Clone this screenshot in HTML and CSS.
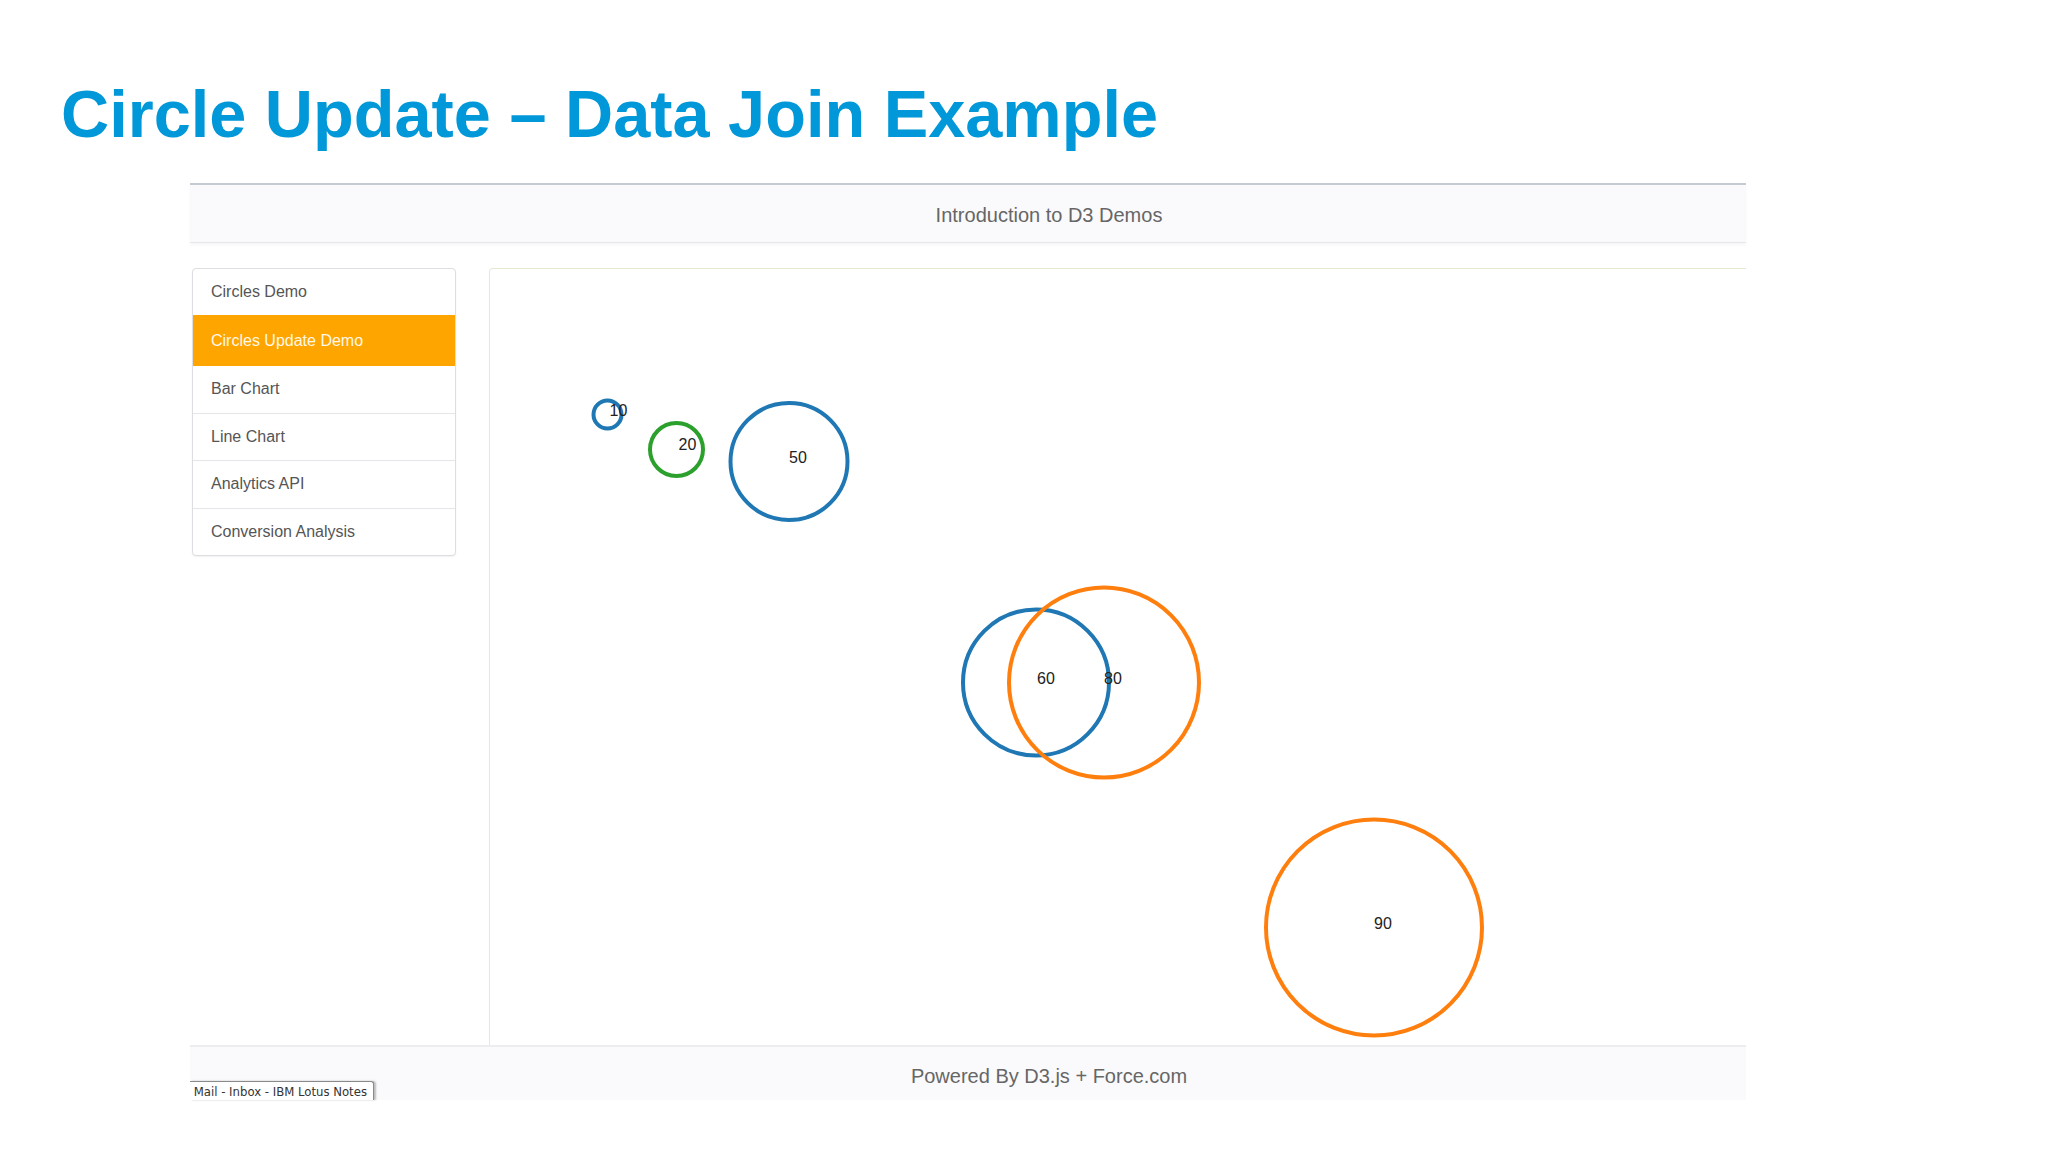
FILE: index.html
```html
<!DOCTYPE html>
<html lang="en">
<head>
<meta charset="utf-8">
<title>Circle Update – Data Join Example</title>
<link rel="stylesheet" href="styles.css">
</head>
<body>
<h1 class="title">Circle Update – Data Join Example</h1>
<div class="app">
  <div class="topbar"><span>Introduction to D3 Demos</span></div>
  <div class="main">
    <ul class="menu">
      <li class="item">Circles Demo</li>
      <li class="item active">Circles Update Demo</li>
      <li class="item">Bar Chart</li>
      <li class="item">Line Chart</li>
      <li class="item">Analytics API</li>
      <li class="item">Conversion Analysis</li>
    </ul>
    <div class="panel">
      <svg class="chart" viewBox="0 0 1256 777" width="1256" height="777">
        <g class="c blue"><circle cx="117.5" cy="145.5" r="14"/><text x="119.5" y="146.5">10</text></g>
        <g class="c green"><circle cx="186.5" cy="180.5" r="26.5"/><text x="188.5" y="180.5">20</text></g>
        <g class="c blue"><circle cx="299" cy="192.5" r="58.5"/><text x="299" y="193.5">50</text></g>
        <g class="c blue"><circle cx="546" cy="413.5" r="73"/><text x="547" y="414.5">60</text></g>
        <g class="c orange"><circle cx="614" cy="413.5" r="95"/><text x="614" y="414.5">80</text></g>
        <g class="c orange"><circle cx="884" cy="658.5" r="108"/><text x="884" y="659.5">90</text></g>
      </svg>
    </div>
  </div>
  <div class="footer">
    <span>Powered By D3.js + Force.com</span>
    <div class="tab"><span>Mail - Inbox - IBM Lotus Notes</span></div>
  </div>
</div>
</body>
</html>
```
FILE: styles.css
```css
html, body {
  margin: 0;
  padding: 0;
  background: #ffffff;
}
body {
  width: 2048px;
  height: 1152px;
  overflow: hidden;
  font-family: "Liberation Sans", Arial, sans-serif;
}
.title {
  margin: 0;
  padding: 81px 0 0 61px;
  font-size: 66.7px;
  line-height: 67px;
  font-weight: bold;
  color: #0098d8;
}
.app {
  margin: 35px 0 0 190px;
  width: 1556px;
}
.topbar {
  border-top: 2px solid #c3cad2;
  border-bottom: 1px solid #e6e6ec;
  background: #fafafc;
  box-shadow: 0 2px 3px rgba(0, 0, 0, 0.04);
  display: flex;
  align-items: center;
  justify-content: center;
  padding-left: 162px;
  padding-top: 3px;
  box-sizing: border-box;
  height: 60px;
  font-size: 20px;
  color: #666;
}
.main {
  display: flex;
  margin-top: 25px;
}
.menu {
  list-style: none;
  margin: 0 0 0 2px;
  padding: 0;
  width: 262px;
  align-self: flex-start;
  border: 1px solid #dedee2;
  border-radius: 4px;
  box-shadow: 0 1px 2px rgba(0, 0, 0, 0.06);
  overflow: hidden;
  background: #fff;
}
.item {
  height: 46.5px;
  display: flex;
  align-items: center;
  padding-left: 18px;
  font-size: 16px;
  color: #555;
  border-top: 1px solid #e6e6ea;
}
.item:first-child {
  border-top: none;
  height: 46px;
}
.item.active {
  background: #ffa500;
  color: #fff8e8;
  border-top-color: #ffa500;
  height: 49px;
}
.active + .item {
  border-top-color: #ffa500;
}
.panel {
  margin-left: 33px;
  flex: 1;
  height: 777px;
  box-sizing: border-box;
  border-left: 1px solid #e6e6e6;
  border-top: 1px solid #e4e9d2;
  border-top-left-radius: 4px;
  overflow: hidden;
}
.chart {
  display: block;
}
.c circle {
  fill: none;
  stroke-width: 4;
}
.c text {
  font-family: "Liberation Sans", Arial, sans-serif;
  font-size: 16px;
  fill: #222;
}
.blue circle { stroke: #1f77b4; }
.green circle { stroke: #2ca02c; }
.orange circle { stroke: #ff7f0e; }
.footer {
  position: relative;
  height: 55px;
  box-sizing: border-box;
  border-top: 2px solid #ededf1;
  background: #fafafc;
  display: flex;
  align-items: center;
  justify-content: center;
  padding-left: 162px;
  padding-top: 5px;
  font-size: 20px;
  color: #666;
}
.tab {
  position: absolute;
  left: 0;
  bottom: 0;
  width: 184px;
  height: 19px;
  box-sizing: border-box;
  border-top: 1px solid #8a8a8a;
  border-right: 1px solid #8a8a8a;
  border-top-right-radius: 3px;
  background: #ffffff;
  box-shadow: 2px 0 2px rgba(0, 0, 0, 0.25);
  overflow: hidden;
  display: flex;
  justify-content: flex-end;
  align-items: center;
  padding-right: 6px;
  white-space: nowrap;
  font-family: "DejaVu Sans Condensed", "DejaVu Sans", sans-serif;
  font-size: 13px;
  color: #333;
}
```
